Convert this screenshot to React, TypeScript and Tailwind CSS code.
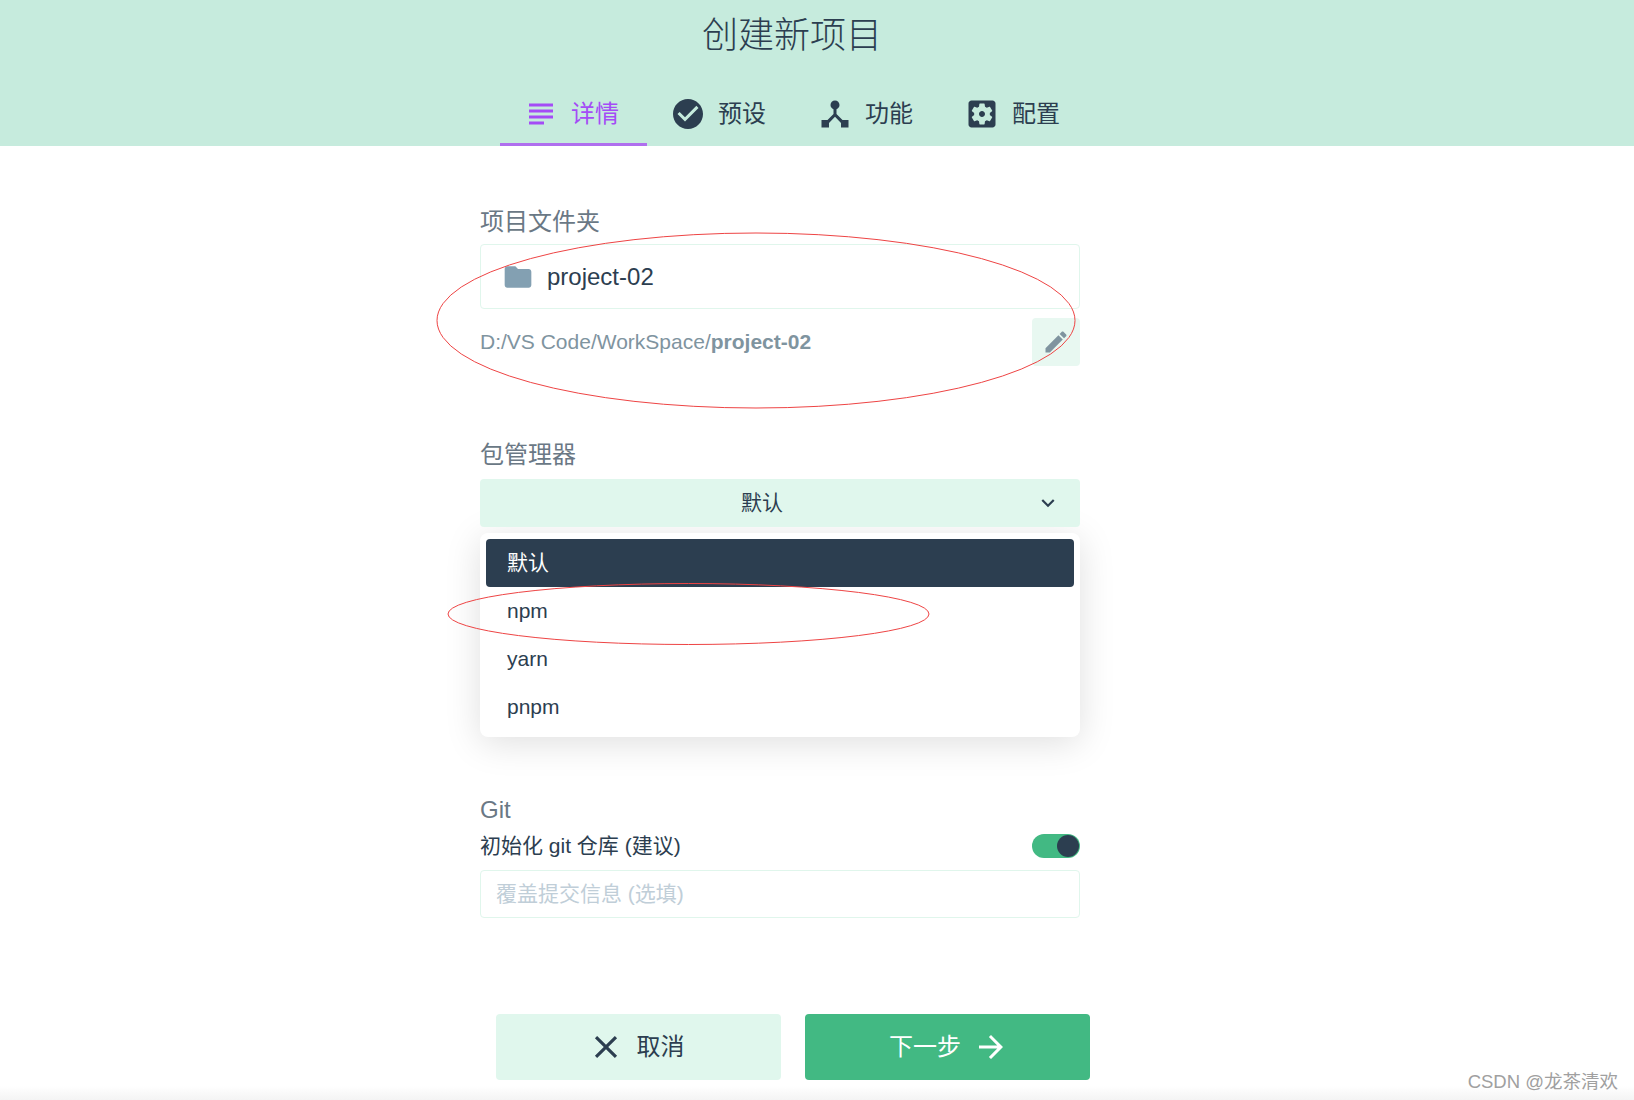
import React from 'react';

const FONT = "font-['Liberation_Sans','Noto_Sans_CJK_SC',sans-serif]";

const Icon: React.FC<{ d: string; className?: string }> = ({ d, className }) => (
  <svg viewBox="0 0 24 24" fill="currentColor" className={className}>
    <path d={d} />
  </svg>
);

const ICONS = {
  subject: 'M14 17H4v2h10v-2zm6-8H4v2h16V9zM4 15h16v-2H4v2zM4 5v2h16V5H4z',
  check: 'M12 2C6.48 2 2 6.48 2 12s4.48 10 10 10 10-4.48 10-10S17.52 2 12 2zm-2 15l-5-5 1.41-1.41L10 14.17l7.59-7.59L19 8l-9 9z',
  hub: 'M17 16l-4-4V8.82C14.16 8.4 15 7.3 15 6c0-1.66-1.34-3-3-3S9 4.34 9 6c0 1.3.84 2.4 2 2.82V12l-4 4H3v5h5v-3.05l4-4.2 4 4.2V21h5v-5h-4z',
  settings: 'M12 10c-1.1 0-2 .9-2 2s.9 2 2 2 2-.9 2-2-.9-2-2-2zm7-7H5c-1.1 0-2 .9-2 2v14c0 1.1.9 2 2 2h14c1.1 0 2-.9 2-2V5c0-1.1-.9-2-2-2zm-1.75 9c0 .23-.02.46-.05.68l1.48 1.16c.13.11.17.3.08.45l-1.4 2.42c-.09.15-.27.21-.43.15l-1.74-.7c-.36.28-.76.51-1.18.69l-.26 1.85c-.03.17-.18.3-.35.3h-2.8c-.17 0-.32-.13-.35-.29l-.26-1.85c-.43-.18-.82-.41-1.18-.69l-1.74.7c-.16.06-.34 0-.43-.15l-1.4-2.42c-.09-.15-.05-.34.08-.45l1.48-1.16c-.03-.23-.05-.46-.05-.69 0-.23.02-.46.05-.68l-1.48-1.16c-.13-.11-.17-.3-.08-.45l1.4-2.42c.09-.15.27-.21.43-.15l1.74.7c.36-.28.76-.51 1.18-.69l.26-1.85c.03-.17.18-.3.35-.3h2.8c.17 0 .32.13.35.29l.26 1.85c.43.18.82.41 1.18.69l1.74-.7c.16-.06.34 0 .43.15l1.4 2.42c.09.15.05.34-.08.45l-1.48 1.16c.03.23.05.46.05.69z',
  folder: 'M10 4H4c-1.1 0-1.99.9-1.99 2L2 18c0 1.1.9 2 2 2h16c1.1 0 2-.9 2-2V8c0-1.1-.9-2-2-2h-8l-2-2z',
  edit: 'M3 17.25V21h3.75L17.81 9.94l-3.75-3.75L3 17.25zM20.71 7.04c.39-.39.39-1.02 0-1.41l-2.34-2.34c-.39-.39-1.02-.39-1.41 0l-1.83 1.83 3.75 3.75 1.83-1.83z',
  chevron: 'M7.41 8.59L12 13.17l4.59-4.58L18 10l-6 6-6-6 1.41-1.41z',
  close: 'M19 6.41L17.59 5 12 10.59 6.41 5 5 6.41 10.59 12 5 17.59 6.41 19 12 13.41 17.59 19 19 17.59 13.41 12z',
  arrow: 'M12 4l-1.41 1.41L16.17 11H4v2h12.17l-5.58 5.59L12 20l8-8z',
};

const tabs = [
  { label: '详情', icon: ICONS.subject, active: true },
  { label: '预设', icon: ICONS.check, active: false },
  { label: '功能', icon: ICONS.hub, active: false },
  { label: '配置', icon: ICONS.settings, active: false },
];

export default function App() {
  return (
    <div className={`relative w-[1634px] h-[1100px] overflow-hidden bg-white text-[#2c3e50] ${FONT}`}>
      <header className="h-[146px] bg-[#c6ebdd]">
        <h1 className="w-[1584px] h-[72px] text-center text-[36px] leading-[72px] font-light">创建新项目</h1>
        <nav className="flex ml-[500px] h-[74px]">
          {tabs.map((tab) => (
            <div
              key={tab.label}
              className={`w-[147px] flex items-center pl-[23px] pt-[13px] border-b-[3px] text-[24px] ${
                tab.active ? 'border-[#b06fee] text-[#a44cf6]' : 'border-transparent'
              }`}
            >
              <Icon d={tab.icon} className="w-9 h-9 shrink-0" />
              <span className="ml-[12px]">{tab.label}</span>
            </div>
          ))}
        </nav>
      </header>

      <main className="ml-[480px] w-[600px]">
        <div className="mt-[60px] h-8 text-[24px] leading-8 text-[#6a7885]">项目文件夹</div>
        <div className="mt-[6px] h-[65px] flex items-center pl-[21px] border border-[#e0f6ec] rounded-[4px] text-[24px]">
          <Icon d={ICONS.folder} className="w-8 h-8 text-[#83a0b2]" />
          <span className="ml-[13px]">project-02</span>
        </div>
        <div className="mt-[9px] h-12 flex items-center justify-between text-[21px] text-[#7f949f]">
          <span>
            D:/VS Code/WorkSpace/<b>project-02</b>
          </span>
          <div className="w-12 h-12 flex items-center justify-center rounded-[4px] bg-[#e8f8f1]">
            <Icon d={ICONS.edit} className="w-7 h-7" />
          </div>
        </div>

        <div className="mt-[73px] h-8 text-[24px] leading-8 text-[#6a7885]">包管理器</div>
        <div className="mt-2 relative h-12 flex items-center justify-center pr-9 rounded-[4px] bg-[#e0f7ed] text-[21px]">
          默认
          <Icon d={ICONS.chevron} className="absolute right-[19px] top-[11px] w-[26px] h-[26px]" />
        </div>
        <div className="mt-[6px] p-[6px] rounded-[8px] bg-white shadow-[0_6px_36px_rgba(0,0,0,0.13)] text-[21px]">
          {['默认', 'npm', 'yarn', 'pnpm'].map((item, i) => (
            <div
              key={item}
              className={`h-12 flex items-center pl-[21px] rounded-[4px] ${i === 0 ? 'bg-[#2c3e50] text-white' : ''}`}
            >
              {item}
            </div>
          ))}
        </div>

        <div className="mt-[57px] h-8 text-[24px] leading-8 text-[#6a7885]">Git</div>
        <div className="mt-[6px] h-7 flex items-center justify-between text-[21px]">
          <span>初始化 git 仓库 (建议)</span>
          <div className="w-12 h-6 flex items-center justify-end pr-px rounded-full bg-[#42b983]">
            <div className="w-[22px] h-[22px] rounded-full bg-[#2c3e50]" />
          </div>
        </div>
        <div className="mt-[10px] h-[48px] flex items-center pl-[15px] border border-[#e0f6ec] rounded-[4px] text-[21px] text-[#c0ced8]">
          覆盖提交信息 (选填)
        </div>
      </main>

      <footer className="mt-[96px] ml-[496px] flex gap-[24px] text-[24px]">
        <div className="w-[285px] h-[66px] flex items-center justify-center pr-[6px] rounded-[4px] bg-[#e0f7ed]">
          <Icon d={ICONS.close} className="w-[38px] h-[38px]" />
          <span className="ml-[12px]">取消</span>
        </div>
        <div className="w-[285px] h-[66px] flex items-center justify-center pl-[3px] rounded-[4px] bg-[#42b983] text-white">
          <span>下一步</span>
          <Icon d={ICONS.arrow} className="ml-[12px] w-9 h-9" />
        </div>
      </footer>

      {/* bottom fade */}
      <div className="absolute left-0 right-0 bottom-0 h-[14px] bg-gradient-to-b from-white to-[#f4f4f4]" />

      {/* red annotations drawn on top of the screenshot */}
      <svg className="absolute inset-0 w-full h-full pointer-events-none" fill="none" stroke="#ee4444" strokeWidth="1">
        <ellipse cx="756" cy="320.5" rx="319" ry="87.5" />
        <ellipse cx="688.5" cy="614" rx="240.5" ry="30.5" />
      </svg>

      <div className="absolute right-[16px] top-[1069px] text-[18.5px] leading-[26px] text-[#a0a0a0]">CSDN @龙茶清欢</div>
    </div>
  );
}
